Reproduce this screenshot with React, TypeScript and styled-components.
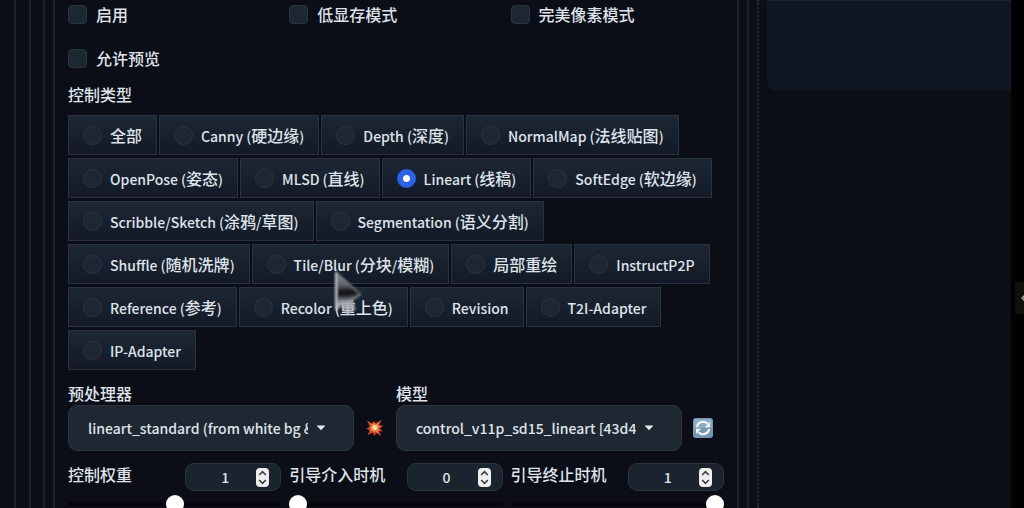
import React from "react";
import styled, { createGlobalStyle } from "styled-components";

const GlobalStyle = createGlobalStyle`
  *, *::before, *::after { box-sizing: border-box; }
  body {
    margin: 0;
    background: #000;
    color: #dfe3ea;
    font: 500 16px/24px "Noto Sans CJK SC", "Noto Sans", sans-serif;
  }
  button, input, select { font: inherit; color: inherit; margin: 0; }
`;

const line = "2px solid #1e212b";

const Page = styled.div`
  display: flex;
  height: 100vh;
  overflow: hidden;
`;

const Workspace = styled.main`
  display: flex;
  flex: 1;
  min-width: 0;
  background: #0b0d17;
`;

const Settings = styled.div`
  display: flex;
  flex: 3 1 16px;
  min-width: 0;
  padding-left: 14px;
`;

const Frame = styled.div<{ $inset: number; $closed?: boolean }>`
  flex: 1;
  display: flex;
  min-width: 0;
  border-left: ${line};
  border-right: ${(p) => (p.$closed ? line : "none")};
  padding-left: ${(p) => p.$inset}px;
  padding-right: ${(p) => (p.$closed ? 8 : 0)}px;
`;

const Unit = styled.form`
  flex: 1;
  min-width: 0;
  border-left: ${line};
  border-right: ${line};
  padding: 2px 13px 0;
`;

const Resizer = styled.div`
  width: 18px;
  flex: none;
  display: flex;
  justify-content: center;
  &::before {
    content: "";
    border-left: 2px dotted #292c36;
  }
`;

const Gallery = styled.aside`
  flex: 1 1 0;
  min-width: 0;
`;

const Preview = styled.div`
  height: 90px;
  background: #111722;
  border-top: 1px solid #1c232f;
  border-radius: 0 0 0 8px;
`;

const Rail = styled.nav`
  width: 13px;
  flex: none;
  display: flex;
  align-items: center;
  padding: 88px 0 0 4px;
`;

const RailButton = styled.button`
  width: 9px;
  height: 32px;
  padding: 0 0 0 6px;
  border: 0;
  overflow: hidden;
  background: #101010;
  border-radius: 2px 0 0 2px;
  display: flex;
  align-items: center;
  svg { flex: none; }
`;

const Thirds = styled.div`
  display: grid;
  grid-template-columns: repeat(3, minmax(0, 1fr));
  column-gap: 8px;
`;

const Checks = styled(Thirds)`
  row-gap: 20px;
`;

const Tick = styled.label`
  display: flex;
  align-items: center;
  gap: 9px;
`;

const Box = styled.input`
  appearance: none;
  width: 19px;
  height: 19px;
  background: #1d2731;
  border: 1px solid #2a3440;
  border-radius: 4px;
`;

const Types = styled.fieldset`
  margin: 12px 0 0;
  padding: 0;
  border: 0;
  min-width: 0;
`;

const Legend = styled.legend`
  padding: 0;
`;

const Chips = styled.div`
  display: flex;
  flex-wrap: wrap;
  gap: 3px 2px;
  padding: 9px 8px 0 0;
`;

const Chip = styled.label`
  display: flex;
  align-items: center;
  gap: 8px;
  height: 40px;
  padding: 0 14px;
  border: 1px solid #29323f;
  background: linear-gradient(#1d2733, #131927);
  white-space: nowrap;
`;

const Radio = styled.input`
  appearance: none;
  width: 19px;
  height: 19px;
  border-radius: 50%;
  background: #1d2731;
  border: 1px solid #2a3440;
  &:checked {
    border-color: #2563eb;
    background: radial-gradient(circle, #fff 3px, #2b62e8 4px);
  }
`;

const Latin = styled.span`
  font-size: 14px;
`;

const Models = styled.div`
  display: grid;
  grid-template-columns: repeat(2, minmax(0, 1fr));
  margin-top: 11px;
`;

const FieldLabel = styled.label`
  display: block;
`;

const PickRow = styled.div`
  display: flex;
  align-items: center;
`;

const Picker = styled.div`
  flex: 1;
  min-width: 0;
  display: grid;
  align-items: center;
  > * { grid-area: 1 / 1; }
  svg { justify-self: end; margin-right: 28px; pointer-events: none; }
`;

const Select = styled.select`
  appearance: none;
  width: 100%;
  height: 46px;
  padding: 0 45px 0 19px;
  background: #1f2832;
  border: 1px solid #2a3440;
  border-radius: 9px;
  font-size: 14px;
`;

const Tool = styled.button`
  width: 42px;
  flex: none;
  display: grid;
  place-items: center;
  padding: 0;
  border: 0;
  background: none;
`;

const Weights = styled(Thirds)`
  margin-top: 12px;
`;

const WeightHead = styled.div`
  display: flex;
  justify-content: space-between;
  align-items: flex-start;
  line-height: 22px;
`;

const NumberBox = styled.div`
  width: 96px;
  height: 28px;
  display: flex;
  align-items: center;
  gap: 8px;
  padding-right: 11px;
  background: #1b242e;
  border: 1px solid #2a3440;
  border-radius: 9px;
`;

const NumberInput = styled.input`
  appearance: textfield;
  flex: 1;
  min-width: 0;
  padding: 0 0 0 16px;
  border: 0;
  background: none;
  text-align: center;
  font-size: 14px;
  &::-webkit-inner-spin-button { display: none; }
`;

const Slider = styled.input`
  appearance: none;
  display: block;
  width: 100%;
  height: 18px;
  margin-top: 4px;
  background: linear-gradient(#05060b, #05060b) center / 100% 4px no-repeat;
  &::-webkit-slider-thumb {
    appearance: none;
    width: 18px;
    height: 18px;
    border-radius: 50%;
    background: #fff;
  }
`;

const Pointer = styled.svg`
  position: absolute;
  left: 331px;
  top: 268px;
  pointer-events: none;
`;

const toggles = ["启用", "低显存模式", "完美像素模式", "允许预览"];

const types = [
  "全部",
  "Canny (硬边缘)",
  "Depth (深度)",
  "NormalMap (法线贴图)",
  "OpenPose (姿态)",
  "MLSD (直线)",
  "Lineart (线稿)",
  "SoftEdge (软边缘)",
  "Scribble/Sketch (涂鸦/草图)",
  "Segmentation (语义分割)",
  "Shuffle (随机洗牌)",
  "Tile/Blur (分块/模糊)",
  "局部重绘",
  "InstructP2P",
  "Reference (参考)",
  "Recolor (重上色)",
  "Revision",
  "T2I-Adapter",
  "IP-Adapter",
];

const weights = [
  { id: "weight", label: "控制权重", value: 1, max: 2 },
  { id: "start", label: "引导介入时机", value: 0, max: 1 },
  { id: "end", label: "引导终止时机", value: 1, max: 1 },
];

// Latin runs are set a little smaller than the Chinese characters beside them.
const Mixed = ({ text }: { text: string }) => (
  <span>
    {text.split(/([\u4e00-\u9fff]+)/).map((run, i) =>
      i % 2 ? run : run && <Latin key={i}>{run}</Latin>
    )}
  </span>
);

const Caret = () => (
  <svg width="10" height="6" viewBox="0 0 10 6">
    <path d="M0.5 0.5h9L5 5.2z" fill="#e8ebf0" />
  </svg>
);

const Burst = () => (
  <svg width="18" height="18" viewBox="0 0 18 18">
    <path
      d="M1 1.5l5 3L8 1.8l1.3 2.5L15.8.8 13 6l4.5.8-3.7 2.6 3.4 3.2-4-.4 2 5-5-3.3L8.4 17l-1.6-3.3L1.4 16l2.3-4.6L.3 9.6l3.4-1.8z"
      fill="#c8432a"
    />
    <path d="M4 4l3 1.6 1.6-1.8 1 2 4-2.6-1.5 3.6 2.6.6-2.4 1.8 1.8 2.4-2.6-.4.8 3-3-2-1.4 1.6-1-2.4-3 1 1.4-3-2-1 2.4-1.2z" fill="#f08a4a" />
    <circle cx="8.8" cy="8.6" r="2.4" fill="#fde3b0" />
  </svg>
);

const Refresh = () => (
  <svg width="20" height="20" viewBox="0 0 20 20">
    <rect width="20" height="20" rx="3" fill="#7597b2" />
    <rect x="1" y="1" width="18" height="9" rx="2" fill="#8fadc3" />
    <g fill="none" stroke="#f4f8fb" strokeWidth="2">
      <path d="M3.8 9a6.3 6.3 0 0 1 10.8-3.2" />
      <path d="M16.2 11a6.3 6.3 0 0 1-10.8 3.2" />
    </g>
    <path d="M17 4v5.2h-5.2zM3 16v-5.2h5.2z" fill="#f4f8fb" />
  </svg>
);

const Spinner = () => (
  <svg width="13" height="19" viewBox="0 0 13 19">
    <rect width="13" height="19" rx="4" fill="#efefef" />
    <path d="M3.2 7l3.3-3.3L9.8 7M3.2 12l3.3 3.3L9.8 12" fill="none" stroke="#3c3c3c" strokeWidth="1.6" />
  </svg>
);

const ModelField = ({ id, label, value, tool, icon }: {
  id: string; label: string; value: string; tool: string; icon: React.ReactNode;
}) => (
  <div>
    <FieldLabel htmlFor={id}>{label}</FieldLabel>
    <PickRow>
      <Picker>
        <Select id={id}><option>{value}</option></Select>
        <Caret />
      </Picker>
      <Tool type="button" aria-label={tool}>{icon}</Tool>
    </PickRow>
  </div>
);

export default function App() {
  return (
    <Page>
      <GlobalStyle />
      <Workspace>
        <Settings>
          <Frame $inset={13}>
            <Frame $inset={12}>
              <Frame $inset={8} $closed>
                <Unit>
                  <Checks>
                    {toggles.map((t) => (
                      <Tick key={t}><Box type="checkbox" />{t}</Tick>
                    ))}
                  </Checks>
                  <Types>
                    <Legend>控制类型</Legend>
                    <Chips>
                      {types.map((t) => (
                        <Chip key={t}>
                          <Radio type="radio" name="type" defaultChecked={t.startsWith("Lineart")} />
                          <Mixed text={t} />
                        </Chip>
                      ))}
                    </Chips>
                  </Types>
                  <Models>
                    <ModelField
                      id="preprocessor"
                      label="预处理器"
                      value="lineart_standard (from white bg & black line)"
                      tool="Run preprocessor"
                      icon={<Burst />}
                    />
                    <ModelField
                      id="model"
                      label="模型"
                      value="control_v11p_sd15_lineart [43d4be0d]"
                      tool="Refresh models"
                      icon={<Refresh />}
                    />
                  </Models>
                  <Weights>
                    {weights.map((w) => (
                      <div key={w.id}>
                        <WeightHead>
                          <label htmlFor={w.id}>{w.label}</label>
                          <NumberBox>
                            <NumberInput id={w.id} type="number" defaultValue={w.value} />
                            <Spinner />
                          </NumberBox>
                        </WeightHead>
                        <Slider type="range" aria-label={w.label} min={0} max={w.max} step="any" defaultValue={w.value} />
                      </div>
                    ))}
                  </Weights>
                </Unit>
              </Frame>
            </Frame>
          </Frame>
        </Settings>
        <Resizer />
        <Gallery><Preview /></Gallery>
      </Workspace>
      <Rail>
        <RailButton type="button" aria-label="Open side panel">
          <svg width="6" height="10" viewBox="0 0 6 10">
            <path d="M5 1L1.2 5 5 9" fill="none" stroke="#b5b5b5" strokeWidth="1.4" />
          </svg>
        </RailButton>
      </Rail>
      <Pointer width="34" height="50" viewBox="0 0 34 50">
        <defs>
          <linearGradient id="arrow" gradientUnits="userSpaceOnUse" x1="14" y1="4" x2="16" y2="48">
            <stop offset="0" stopColor="#8b8e95" />
            <stop offset="0.3" stopColor="#5d6067" />
            <stop offset="0.45" stopColor="#0c0c10" />
            <stop offset="0.55" stopColor="#2a2c32" />
            <stop offset="0.68" stopColor="#a3a6ac" stopOpacity="0.9" />
            <stop offset="1" stopColor="#b9bbc0" stopOpacity="0.6" />
          </linearGradient>
          <filter id="motion"><feGaussianBlur stdDeviation="0.8" /></filter>
        </defs>
        <g filter="url(#motion)">
          <path d="M5 4v38l6-5 5 9 8-5-3-9 9-6z" fill="url(#arrow)" />
          <path d="M5 4l24 22" stroke="#7d8087" strokeWidth="2" opacity="0.7" />
          <path d="M5 4v38" stroke="#c4c6cb" strokeWidth="2" />
          <path d="M5 42l6-5 5 9 8-5-3-9 9-6" fill="none" stroke="#a9acb2" strokeWidth="2" opacity="0.6" />
        </g>
      </Pointer>
    </Page>
  );
}
